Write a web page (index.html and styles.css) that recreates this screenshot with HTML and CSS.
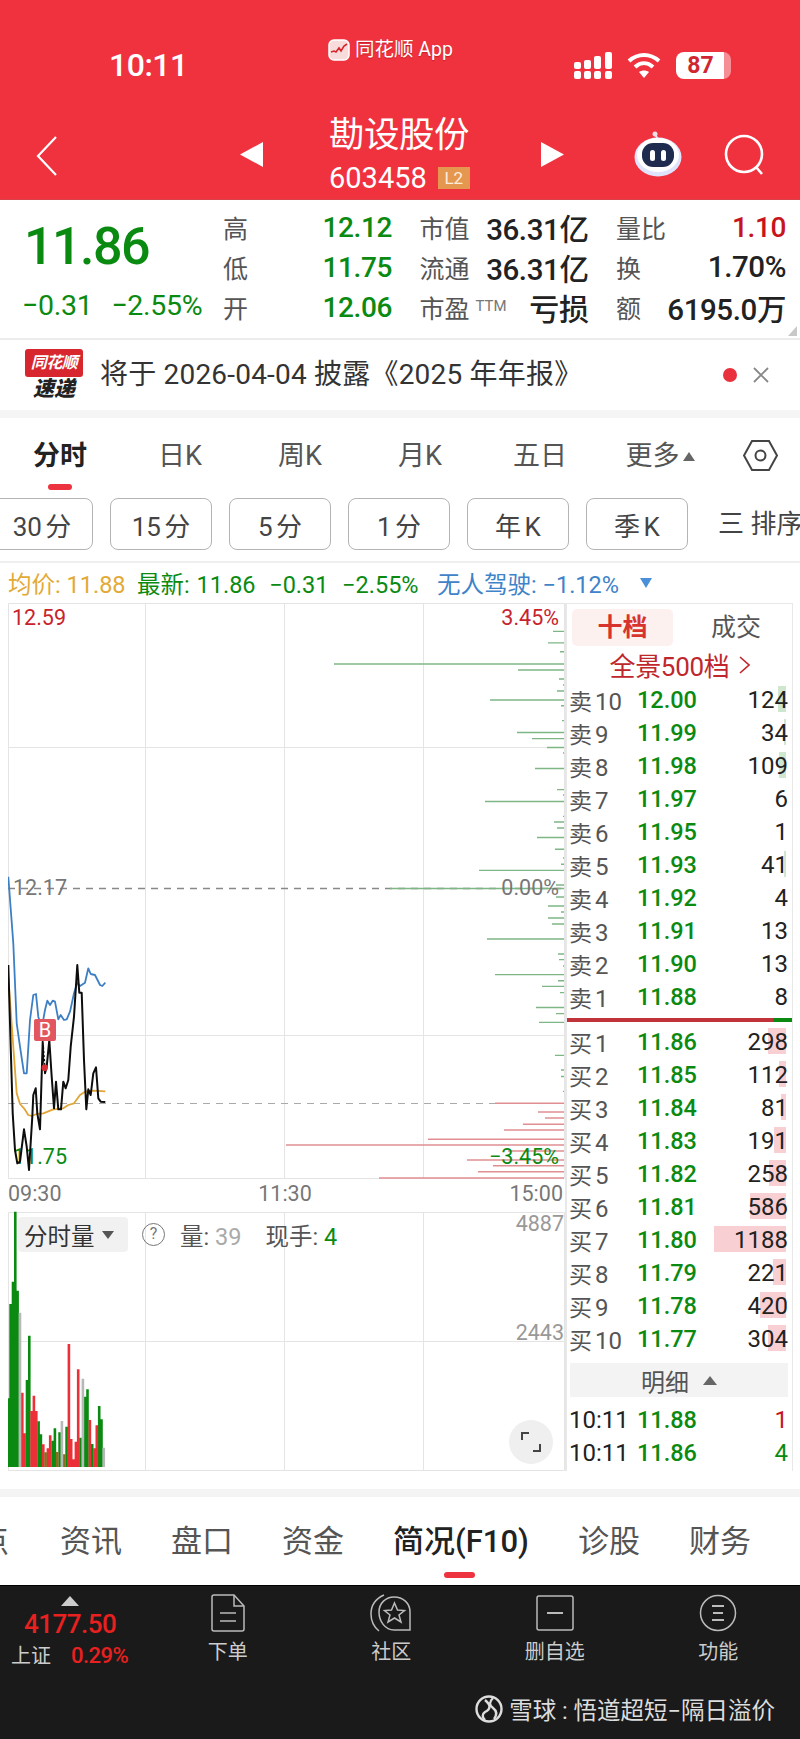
FILE: index.html
```html
<!DOCTYPE html>
<html lang="zh-CN">
<head>
  <meta charset="UTF-8" />
  <meta name="viewport" content="width=device-width, initial-scale=1" />
  <title>勘设股份 603458</title>
  <link rel="stylesheet" href="styles.css">
</head>
<body>

<header class="top">
  <div class="status">
    <span class="time">10:11</span>
    <span class="from-app">
      <svg class="app-icon" width="22" height="22" viewBox="0 0 22 22">
        <rect x="1" y="1" width="20" height="20" rx="5" fill="#f8dcdc" stroke="#fff" stroke-width="1.5"/>
        <path d="M3 13l3-1 2 1 3-4 2 3 3-5 3-2" fill="none" stroke="#d8262f" stroke-width="1.6"/>
      </svg>
      同花顺 App
    </span>
    <svg class="signal" width="38" height="27" viewBox="0 0 38 27" fill="#fff">
      <rect x="0" y="19" width="7" height="8" rx="2"/>
      <rect x="10" y="19" width="7" height="8" rx="2"/>
      <rect x="20" y="19" width="7" height="8" rx="2"/>
      <rect x="31" y="19" width="7" height="8" rx="2"/>
      <rect x="0" y="10" width="7" height="7" rx="2"/>
      <rect x="10" y="8" width="7" height="9" rx="2"/>
      <rect x="20" y="4" width="7" height="13" rx="2"/>
      <rect x="31" y="0" width="7" height="17" rx="2"/>
    </svg>
    <svg class="wifi" width="34" height="27" viewBox="0 0 34 27" fill="none" stroke="#fff" stroke-width="4">
      <path d="M2 9c9-8 21-8 30 0"/>
      <path d="M8 15c5.500-5 12.500-5 18 0"/>
      <path d="M17 26l-5-6c3-2 7-2 10 0z" fill="#fff" stroke="none"/>
    </svg>
    <span class="battery"><b>87</b></span>
  </div>

  <nav class="nav">
    <svg class="back" width="22" height="40" viewBox="0 0 22 40" fill="none" stroke="#fff" stroke-width="2.2">
      <path d="M20 1L2 20l18 19"/>
    </svg>
    <svg class="prev" width="23" height="25" viewBox="0 0 23 25" fill="#fff"><path d="M23 0v25L0 12.500z"/></svg>
    <div class="stock">
      <div class="stock-name">勘设股份</div>
      <div class="stock-code">603458 <span class="l2">L2</span></div>
    </div>
    <svg class="next" width="23" height="25" viewBox="0 0 23 25" fill="#fff"><path d="M0 0v25l23-12.500z"/></svg>
    <svg class="robot" width="48" height="46" viewBox="0 0 48 46">
      <circle cx="21" cy="3" r="2.500" fill="#f0dfe6"/>
      <path d="M21 4l4 5" stroke="#f0dfe6" stroke-width="2"/>
      <ellipse cx="24" cy="26" rx="23.500" ry="19.500" fill="#dfe3fb"/>
      <ellipse cx="24" cy="24" rx="21" ry="17" fill="#fff"/>
      <rect x="8" y="12" width="32" height="24" rx="11" fill="#1f2a4f"/>
      <rect x="16" y="19" width="5" height="11" rx="2.500" fill="#fff"/>
      <rect x="27" y="19" width="5" height="11" rx="2.500" fill="#fff"/>
    </svg>
    <svg class="search" width="42" height="42" viewBox="0 0 42 42" fill="none" stroke="#fff" stroke-width="2.6">
      <circle cx="20" cy="20" r="18"/>
      <path d="M32 33l6 7"/>
    </svg>
  </nav>
</header>

<section class="quote">
  <div class="price-block">
    <div class="last">11.86</div>
    <div class="change"><span>−0.31</span><span>−2.55%</span></div>
  </div>
  <div class="stats">
    <div class="stat"><span class="key">高</span><span class="val green">12.12</span></div>
    <div class="stat"><span class="key">市值</span><span class="val dark">36.31亿</span></div>
    <div class="stat"><span class="key">量比</span><span class="val red">1.10</span></div>
    <div class="stat"><span class="key">低</span><span class="val green">11.75</span></div>
    <div class="stat"><span class="key">流通</span><span class="val dark">36.31亿</span></div>
    <div class="stat"><span class="key">换</span><span class="val dark">1.70%</span></div>
    <div class="stat"><span class="key">开</span><span class="val green">12.06</span></div>
    <div class="stat"><span class="key">市盈<small>TTM</small></span><span class="val dark strong">亏损</span></div>
    <div class="stat"><span class="key">额</span><span class="val dark">6195.0万</span></div>
  </div>
  <i class="corner"></i>
</section>

<section class="notice">
  <div class="logo">
    <span class="logo-top">同花顺</span>
    <span class="logo-bottom">速递</span>
  </div>
  <p class="notice-text">将于 2026-04-04 披露《2025 年年报》</p>
  <i class="dot"></i>
  <svg class="close" width="16" height="16" viewBox="0 0 16 16" stroke="#888" stroke-width="1.8"><path d="M1 1l14 14M15 1L1 15"/></svg>
</section>

<section class="periods">
  <div class="period active">分时</div>
  <div class="period">日K</div>
  <div class="period">周K</div>
  <div class="period">月K</div>
  <div class="period">五日</div>
  <div class="period">更多<i class="up"></i></div>
  <svg class="hex" width="35" height="31" viewBox="0 0 35 31" fill="none" stroke="#444" stroke-width="2">
    <path d="M9 1h17l8 14.500L26 30H9L1 15.500z"/>
    <circle cx="17.500" cy="15.500" r="5"/>
  </svg>
</section>

<section class="minutes">
  <button class="minute">30 分</button>
  <button class="minute">15 分</button>
  <button class="minute">5 分</button>
  <button class="minute">1 分</button>
  <button class="minute">年 K</button>
  <button class="minute">季 K</button>
  <span class="sort">三 排序</span>
</section>

<section class="legend">
  <span class="avg">均价: 11.88</span>
  <span class="latest">最新: 11.86&nbsp; −0.31&nbsp; −2.55%</span>
  <span class="index">无人驾驶: −1.12%</span>
  <i class="down"></i>
</section>

<section class="board">
  <div class="chart">
    <!-- viewBox follows page coordinates so points read as x,y on the screen -->
    <svg width="557" height="868" viewBox="8 603 557 868">
      <g class="grid">
        <path d="M8.500 603.500H564.500V1178.500H8.500z"/>
        <path d="M145.500 603V1178M284.500 603V1178M423.500 603V1178"/>
        <path d="M8 747.500H564M8 1035.500H564"/>
        <path d="M8.500 1212.500H564.500V1470.500H8.500z"/>
        <path d="M145.500 1212V1470M284.500 1212V1470M423.500 1212V1470"/>
        <path d="M8 1341.500H564"/>
      </g>

      <path class="preclose" d="M8 888.500H564"/>
      <path class="avgline" d="M8 1103.500H564"/>

      <path class="ask-lines" d="M553 631.400H564M548 642.900H564M560 651.700H564M334 664H564M518 670H564M559 679H564M563 685H564M557 691H564M490 700H564M561 705.700H564M562 720.600H564M517 732.500H564M532 738.600H564M547 747.500H564M563 753H564M535 768.500H564M557 789.600H564M563 795H564M485 801.500H564M563 816.400H564M554 822H564M557 828H564M537 837.500H564M555 849.300H564M563 858H564M561 864.300H564M479 870.400H564M556 885H564M390 888.500H564M556 897H564M548 906H564M561 912H564M548 918H564M552 924H564M487 939H564M558 954H564M559 959.600H564M563 966H564M495 974.600H564M558 980.700H564M542 986.400H564M560 992.600H564M536 1007.500H564M556 1013.600H564M539 1022.400H564M555 1055.400H564M561 1070H564M561 1076.500H564M563 1091.400H564"/>
      <path class="bid-lines" d="M495 1103.300H564M538 1112H564M545 1118H564M523 1124.300H564M504 1130H564M428 1139.300H564M286 1145H564M508 1151H564M467 1160H564M493 1165.700H564M478 1171.800H564M379 1178H564"/>

      <text class="tick red-text" x="12" y="625">12.59</text>
      <text class="tick red-text end" x="559" y="625">3.45%</text>
      <text class="tick grey-text" x="13" y="895">12.17</text>
      <text class="tick grey-text end" x="559" y="895">0.00%</text>
      <text class="tick green-text" x="13" y="1164">11.75</text>
      <text class="tick green-text end" x="559" y="1164">−3.45%</text>
      <text class="tick grey-text" x="8" y="1201">09:30</text>
      <text class="tick grey-text mid" x="285" y="1201">11:30</text>
      <text class="tick grey-text end" x="563" y="1201">15:00</text>
      <text class="tick light-text end" x="564" y="1231">4887</text>
      <text class="tick light-text end" x="564" y="1340">2443</text>

      <polyline class="index-line" points="8.300,876.700 13.300,943.300 16.700,1023.300 20,1046.700 24,1073.300 26.700,1073.300 30,1020 33.300,995 36,994 38.300,1016.700 41.700,1028.300 45,1010 47.300,1000.700 50,1005 52.700,1000.700 55,1001.700 58.300,1019.300 60.700,1015 64,1020 66.700,1019.300 70,1011.700 74,993.300 77.300,982.700 80,986 85,982.700 88.300,968.300 90.700,974 95,975 100,985 102.300,986 105.300,982.700"/>
      <polyline class="avg-line" points="8.300,976.700 13.300,1046.700 16.700,1093.300 20,1104 24,1108.300 28.300,1115 31.700,1116 36.700,1114 43.300,1113.300 53.300,1109.300 63.300,1108.300 68.300,1105 74,1103.300 80,1095 85,1091.700 93.300,1090.700 105.300,1091.300"/>
      <polyline class="price-line" points="8.300,965 10.700,1046.700 12.700,1113.300 15,1150 17.300,1163.300 20,1161.700 24,1129.300 26.700,1146.700 29,1170 32.300,1116.700 33.300,1095 35.700,1088.300 37.300,1113.300 40,1129.300 42.700,1041.700 45,1073.300 46.700,1066.700 49.300,1040 51.700,1076.700 54,1108.300 56,1081.700 58.300,1109.300 61,1109.300 63.300,1081.700 65.700,1088.300 68.300,1080 70.700,1046.700 74,1016.700 77.300,965 79.300,992.700 81.700,992.700 84,1060 86.300,1109.300 88.300,1089.300 90.700,1095 93.300,1073.300 96,1067.300 98.300,1098.300 100.700,1101.700 105.300,1102"/>

      <path class="b-stem" d="M44.700 1041V1067"/>
      <circle class="b-dot" cx="44.700" cy="1067.700" r="3.200"/>
      <rect class="b-tag" x="34" y="1019" width="22" height="22" rx="2"/>
      <text class="b-text" x="45" y="1037">B</text>

      <!-- volume bars, one group per colour -->
      <path class="vol-down" d="M8.300 1398.300V1467M10.600 1304V1467M13 1281.700V1467M15.300 1211.700V1467M17.600 1290.700V1467M27 1380V1467M29.300 1335.700V1467M38.600 1421.300V1467M40.900 1434.300V1467M52.600 1440.700V1467M54.900 1428.300V1467M59.600 1432.300V1467M66.600 1426.700V1467M80.500 1437.700V1467M85.200 1396.700V1467M87.500 1389.300V1467M92.200 1444V1467M99.200 1406V1467M101.500 1419.300V1467"/>
      <path class="vol-up" d="M22.300 1392.700V1467M24.600 1433.300V1467M31.600 1411V1467M33.900 1395.700V1467M36.300 1411V1467M43.300 1444.300V1467M47.900 1448.300V1467M50.200 1435.300V1467M68.900 1344V1467M71.200 1439V1467M73.500 1459.300V1467M75.900 1441.700V1467M78.200 1369.300V1467M89.900 1420V1467M94.500 1448.300V1467M96.800 1425.300V1467"/>
      <path class="vol-mix" d="M45.600 1452.300V1467M57.200 1452V1467M64.200 1454.300V1467"/>
      <path class="vol-flat" d="M20 1312.700V1467M61.900 1421V1467M82.900 1378.700V1467M103.800 1447.700V1467"/>
    </svg>

    <div class="vol-head">
      <span class="vol-pick">分时量<i class="down-dark"></i></span>
      <span class="help">?</span>
      <span class="vol-key">量: <em class="vol-num">39</em></span>
      <span class="vol-key">现手: <em class="vol-hand">4</em></span>
    </div>
    <div class="expand">
      <svg width="22" height="22" viewBox="0 0 22 22" fill="none" stroke="#444" stroke-width="2">
        <path d="M2 9V2h7M20 13v7h-7"/>
      </svg>
    </div>
  </div>

  <aside class="book">
    <div class="book-tabs">
      <div class="book-tab on">十档</div>
      <div class="book-tab">成交</div>
    </div>
    <div class="panorama">全景500档 <svg width="11" height="18" viewBox="0 0 11 18" fill="none" stroke="#c0272d" stroke-width="1.600"><path d="M1 1l9 8-9 8"/></svg></div>

    <div class="row"><span class="lv">卖<b>10</b></span><span class="pr">12.00</span><span class="qty">124</span><i class="ask" style="width:8px"></i></div>
    <div class="row"><span class="lv">卖<b>9</b></span><span class="pr">11.99</span><span class="qty">34</span><i class="ask" style="width:2px"></i></div>
    <div class="row"><span class="lv">卖<b>8</b></span><span class="pr">11.98</span><span class="qty">109</span><i class="ask" style="width:7px"></i></div>
    <div class="row"><span class="lv">卖<b>7</b></span><span class="pr">11.97</span><span class="qty">6</span></div>
    <div class="row"><span class="lv">卖<b>6</b></span><span class="pr">11.95</span><span class="qty">1</span></div>
    <div class="row"><span class="lv">卖<b>5</b></span><span class="pr">11.93</span><span class="qty">41</span><i class="ask" style="width:2px"></i></div>
    <div class="row"><span class="lv">卖<b>4</b></span><span class="pr">11.92</span><span class="qty">4</span></div>
    <div class="row"><span class="lv">卖<b>3</b></span><span class="pr">11.91</span><span class="qty">13</span></div>
    <div class="row"><span class="lv">卖<b>2</b></span><span class="pr">11.90</span><span class="qty">13</span></div>
    <div class="row"><span class="lv">卖<b>1</b></span><span class="pr">11.88</span><span class="qty">8</span></div>

    <div class="ratio"><i class="ratio-bid"></i><i class="ratio-ask"></i></div>

    <div class="row"><span class="lv">买<b>1</b></span><span class="pr">11.86</span><span class="qty">298</span><i class="bid" style="width:18px"></i></div>
    <div class="row"><span class="lv">买<b>2</b></span><span class="pr">11.85</span><span class="qty">112</span><i class="bid" style="width:7px"></i></div>
    <div class="row"><span class="lv">买<b>3</b></span><span class="pr">11.84</span><span class="qty">81</span><i class="bid" style="width:5px"></i></div>
    <div class="row"><span class="lv">买<b>4</b></span><span class="pr">11.83</span><span class="qty">191</span><i class="bid" style="width:12px"></i></div>
    <div class="row"><span class="lv">买<b>5</b></span><span class="pr">11.82</span><span class="qty">258</span><i class="bid" style="width:17px"></i></div>
    <div class="row"><span class="lv">买<b>6</b></span><span class="pr">11.81</span><span class="qty">586</span><i class="bid" style="width:36px"></i></div>
    <div class="row"><span class="lv">买<b>7</b></span><span class="pr">11.80</span><span class="qty">1188</span><i class="bid" style="width:72px"></i></div>
    <div class="row"><span class="lv">买<b>8</b></span><span class="pr">11.79</span><span class="qty">221</span><i class="bid" style="width:13px"></i></div>
    <div class="row"><span class="lv">买<b>9</b></span><span class="pr">11.78</span><span class="qty">420</span><i class="bid" style="width:26px"></i></div>
    <div class="row"><span class="lv">买<b>10</b></span><span class="pr">11.77</span><span class="qty">304</span><i class="bid" style="width:18px"></i></div>

    <div class="detail">明细<i class="up-dark"></i></div>
    <div class="row"><span class="clock">10:11</span><span class="pr">11.88</span><span class="qty buy">1</span></div>
    <div class="row"><span class="clock">10:11</span><span class="pr">11.86</span><span class="qty sell">4</span></div>
  </aside>
</section>

<div class="band"></div>

<section class="sections">
  <span class="section cut">点</span>
  <span class="section">资讯</span>
  <span class="section">盘口</span>
  <span class="section">资金</span>
  <span class="section current">简况(F10)</span>
  <span class="section">诊股</span>
  <span class="section">财务</span>
</section>

<footer class="dock">
  <div class="dock-row">
    <div class="market">
      <i class="market-up"></i>
      <div class="market-num">4177.50</div>
      <div class="market-sub"><span>上证</span><b>0.29%</b></div>
    </div>
    <div class="dock-item">
      <svg width="34" height="38" viewBox="0 0 34 38" fill="none" stroke="#bbb" stroke-width="1.500">
        <path d="M3 1h20l10 11v23a2 2 0 0 1-2 2H3a2 2 0 0 1-2-2V3a2 2 0 0 1 2-2z"/>
        <path d="M23 1v11h10M9 19h16M9 27h16"/>
      </svg>
      <span>下单</span>
    </div>
    <div class="dock-item">
      <svg width="42" height="38" viewBox="0 0 42 38" fill="none" stroke="#bbb" stroke-width="1.500">
        <path d="M14 1C5 5 1 12 1 20c0 7 3 13 8 17"/>
        <path d="M24 3c-8 0-15 6-15 15s6 18 15 18h16V18c0-9-7-15-16-15z"/>
        <path d="M24.500 9l3 7 7 .500-5.500 4.500 2 7-6.500-4-6.500 4 2-7-5.500-4.500 7-.500z"/>
      </svg>
      <span>社区</span>
    </div>
    <div class="dock-item">
      <svg width="38" height="38" viewBox="0 0 38 38" fill="none" stroke="#bbb" stroke-width="1.500">
        <rect x="1" y="2" width="36" height="34" rx="2"/>
        <path d="M11 19h16" stroke-width="2"/>
      </svg>
      <span>删自选</span>
    </div>
    <div class="dock-item">
      <svg width="38" height="38" viewBox="0 0 38 38" fill="none" stroke="#bbb" stroke-width="1.500">
        <circle cx="19" cy="19" r="17.500"/>
        <path d="M13 12h12M14 19h10M13 26h12" stroke-width="2"/>
      </svg>
      <span>功能</span>
    </div>
  </div>
  <div class="mark">
    <svg width="28" height="28" viewBox="0 0 28 28" fill="none" stroke="#ddd" stroke-width="2.400">
      <circle cx="14" cy="14" r="12.500"/>
      <path d="M10 5c6 5 6 9 0 12-3 2-3 5 0 8M18 3c-4 4-4 7 0 10 4 3 4 7 1 11"/>
    </svg>
    <span>雪球 : 悟道超短−隔日溢价</span>
  </div>
</footer>

</body>
</html>
```

FILE: styles.css
```css
* {
  box-sizing: border-box;
}

body {
  margin: 0;
  width: 800px;
  height: 1739px;
  overflow: hidden;
  background: #fff;
  color: #222;
  font-family: Roboto, "Noto Sans CJK SC", sans-serif;
}

i {
  display: block;
  font-style: normal;
}

em {
  font-style: normal;
}

/* red header */
.top {
  height: 200px;
  background: #f0323f;
  color: #fff;
  border-bottom: 1px solid #d9414a;
}

.status {
  height: 100px;
  display: flex;
  align-items: flex-start;
  padding-left: 109px;
}

.time {
  width: 219px;
  margin-top: 45px;
  font-size: 32px;
  line-height: 40px;
  font-weight: 500;
  letter-spacing: -0.5px;
}

.from-app {
  width: 246px;
  margin-top: 39px;
  display: flex;
  align-items: center;
  gap: 5px;
  font-size: 19.500px;
  line-height: 22px;
  text-shadow: 0 1px 1px rgba(120, 0, 0, 0.4);
}

.signal {
  margin-top: 52px;
}

.wifi {
  margin: 52px 0 0 15px;
}

.battery {
  margin: 52px 0 0 15px;
  width: 55px;
  height: 27px;
  border-radius: 8px;
  background: linear-gradient(90deg, #fff 88%, rgba(255, 255, 255, 0.45) 88%);
  color: #d0262f;
  text-align: center;
  line-height: 27px;
  font-size: 23px;
  padding-right: 6px;
}

.nav {
  height: 99px;
  display: flex;
  align-items: flex-start;
  padding-left: 36px;
}

.back {
  margin-top: 36px;
}

.prev {
  margin: 42px 0 0 182px;
}

.stock {
  width: 278px;
  padding-left: 66px;
  margin-top: 14px;
}

.stock-name {
  font-size: 35.500px;
  line-height: 42px;
  letter-spacing: -0.5px;
}

.stock-code {
  margin-top: 10px;
  display: flex;
  align-items: center;
  gap: 11px;
  font-size: 29px;
  line-height: 24px;
}

.l2 {
  width: 32px;
  height: 22px;
  background: #e6974f;
  text-align: center;
  font-size: 17px;
  line-height: 22px;
  color: #fbeedd;
}

.next {
  margin-top: 42px;
}

.robot {
  margin: 31px 0 0 70px;
}

.search {
  margin: 34px 0 0 42px;
}

/* quote summary */
.quote {
  position: relative;
  height: 140px;
  display: flex;
  border-bottom: 2px solid #ececec;
}

.price-block {
  width: 223px;
  padding-left: 22px;
}

.last {
  margin: 19px 0 0 2px;
  font-size: 52px;
  line-height: 56px;
  font-weight: 500;
  color: #0b8a12;
  letter-spacing: -1.500px;
}

.change {
  margin-top: 16px;
  display: flex;
  gap: 19px;
  font-size: 28.500px;
  line-height: 30px;
  color: #0b8a12;
  letter-spacing: -0.3px;
}

.stats {
  width: 563px;
  margin-top: 7px;
  display: grid;
  grid-template-columns: 169px 169px 170px;
  grid-auto-rows: 40px;
  column-gap: 27.500px;
}

.stat {
  display: flex;
  justify-content: space-between;
  align-items: center;
}

.key {
  font-size: 25px;
  color: #555;
  white-space: nowrap;
}

.key small {
  margin-left: 6px;
  font-size: 15px;
  vertical-align: 7px;
  color: #777;
}

.val {
  font-size: 28px;
  font-weight: 500;
  letter-spacing: -0.4px;
  white-space: nowrap;
}

.green {
  color: #0b8a12;
}

.red {
  color: #c8141e;
}

.dark {
  color: #222;
  font-size: 29.500px;
}

.strong {
  font-size: 30px;
}

.corner {
  position: absolute;
  right: 3px;
  bottom: 2px;
  width: 0;
  height: 0;
  border-left: 9px solid transparent;
  border-bottom: 10px solid #c8c8c8;
}

/* notice strip */
.notice {
  display: flex;
  align-items: center;
  border-bottom: 8px solid #f5f5f5;
  height: 78px;
  padding: 0 0 0 25px;
}

.logo {
  width: 58px;
  display: flex;
  flex-direction: column;
  align-items: center;
}

.logo-top {
  width: 58px;
  height: 28px;
  background: #d8262f;
  border-radius: 3px;
  color: #fff;
  font-size: 16px;
  line-height: 28px;
  font-weight: 700;
  font-style: italic;
  text-align: center;
  letter-spacing: -0.5px;
}

.logo-bottom {
  margin-top: 1px;
  font-size: 21px;
  line-height: 23px;
  font-weight: 900;
  font-style: italic;
  color: #222;
}

.notice-text {
  margin: 0 0 0 17px;
  width: 614px;
  font-size: 28px;
  line-height: 36px;
  color: #333;
  letter-spacing: 0.2px;
  white-space: nowrap;
}

.dot {
  margin-left: 9px;
  width: 14px;
  height: 14px;
  border-radius: 50%;
  background: #e8313c;
}

.close {
  margin-left: 16px;
}

/* chart period tabs */
.periods {
  height: 80px;
  display: flex;
  align-items: flex-start;
}

.period {
  position: relative;
  width: 120px;
  margin-top: 19px;
  display: flex;
  justify-content: center;
  align-items: center;
  font-size: 27px;
  line-height: 38px;
  color: #555;
}

.period.active {
  color: #222;
  font-weight: 700;
}

.period.active::after {
  content: "";
  position: absolute;
  left: 48px;
  top: 47px;
  width: 24px;
  height: 6px;
  border-radius: 3px;
  background: #ee3340;
}

.up {
  margin-left: 3px;
  width: 0;
  height: 0;
  border-left: 6px solid transparent;
  border-right: 6px solid transparent;
  border-bottom: 9px solid #666;
}

.hex {
  margin: 22px 0 0 23px;
}

.minutes {
  height: 65px;
  margin-left: -9px;
  display: flex;
  align-items: flex-start;
  gap: 17px;
  white-space: nowrap;
  border-bottom: 2px solid #efefef;
  width: 809px;
}

.minute {
  width: 102px;
  height: 52px;
  padding: 0;
  flex: none;
  border: 1px solid #b4b4b4;
  border-radius: 8px;
  background: #fff;
  color: #444;
  font-family: inherit;
  font-size: 26px;
  word-spacing: -3px;
}

.sort {
  margin-left: 13px;
  font-size: 26px;
  line-height: 52px;
  color: #444;
}

.legend {
  height: 40px;
  padding-left: 8px;
  display: flex;
  align-items: center;
  font-size: 23.500px;
  white-space: nowrap;
}

.avg {
  width: 129px;
  color: #e2aa36;
}

.latest {
  width: 300px;
  color: #0b8a12;
  word-spacing: 1px;
}

.index {
  width: 203px;
  color: #3f83c8;
}

.down {
  width: 0;
  height: 0;
  border-left: 6px solid transparent;
  border-right: 6px solid transparent;
  border-top: 10px solid #4a90d9;
}

/* chart and order book */
.board {
  height: 868px;
  margin-left: 8px;
  display: flex;
}

.chart {
  position: relative;
  width: 557px;
  height: 868px;
}

.chart svg {
  display: block;
}

.grid path {
  fill: none;
  stroke: #e4e4e4;
  stroke-width: 1;
}

.preclose {
  stroke: #888;
  stroke-width: 1.400;
  stroke-dasharray: 7 6;
}

.avgline {
  stroke: #aaa;
  stroke-width: 1;
  stroke-dasharray: 7 6;
}

.ask-lines {
  stroke: #7fb685;
  stroke-width: 1.400;
}

.bid-lines {
  stroke: #df8f92;
  stroke-width: 1.400;
}

.tick {
  font-size: 21.500px;
}

.end {
  text-anchor: end;
}

.mid {
  text-anchor: middle;
}

.red-text {
  fill: #c8232c;
}

.grey-text {
  fill: #777;
}

.green-text {
  fill: #0b8a12;
}

.light-text {
  fill: #999;
}

.index-line,
.avg-line,
.price-line {
  fill: none;
  stroke-linejoin: round;
}

.index-line {
  stroke: #3d7fc4;
  stroke-width: 1.800;
}

.avg-line {
  stroke: #e0a535;
  stroke-width: 1.800;
}

.price-line {
  stroke: #0d0d0d;
  stroke-width: 2;
}

.b-stem {
  stroke: #fff;
  stroke-width: 1;
  stroke-dasharray: 2 2;
}

.b-dot {
  fill: #d92f37;
}

.b-tag {
  fill: #e2565f;
}

.b-text {
  fill: #fff;
  font-size: 20px;
  text-anchor: middle;
}

.vol-down,
.vol-up,
.vol-mix,
.vol-flat {
  stroke-width: 2.600;
}

.vol-down {
  stroke: #0b8a12;
}

.vol-up {
  stroke: #ec3038;
}

.vol-mix {
  stroke: #8c6a1f;
}

.vol-flat {
  stroke: #b8b8b8;
}

.vol-head {
  position: absolute;
  left: 10px;
  top: 614px;
  display: flex;
  align-items: center;
  font-size: 23.500px;
  color: #555;
  white-space: nowrap;
}

.vol-pick {
  width: 110px;
  height: 35px;
  display: flex;
  align-items: center;
  padding-left: 6px;
  border-radius: 4px;
  background: rgba(240, 240, 240, 0.95);
  color: #333;
}

.down-dark {
  margin-left: 7px;
  width: 0;
  height: 0;
  border-left: 6px solid transparent;
  border-right: 6px solid transparent;
  border-top: 8px solid #555;
}

.help {
  margin-left: 14px;
  width: 23px;
  height: 23px;
  border: 1.500px solid #777;
  border-radius: 50%;
  text-align: center;
  font-size: 16px;
  line-height: 20px;
  color: #777;
}

.vol-key {
  margin-left: 15px;
}

.vol-key + .vol-key {
  margin-left: 24px;
}

.vol-num {
  color: #aaa;
}

.vol-hand {
  color: #0b8a12;
}

.expand {
  position: absolute;
  left: 501px;
  top: 817px;
  width: 44px;
  height: 44px;
  border-radius: 50%;
  background: #efefef;
  display: flex;
  align-items: center;
  justify-content: center;
}

.book {
  width: 228px;
  height: 868px;
  border-top: 1px solid #e8e8e8;
  border-left: 2px solid #e8e8e8;
  border-right: 1px solid #e8e8e8;
}

.book-tabs {
  margin: 5px 0 0 5px;
  display: flex;
  height: 37px;
}

.book-tab {
  width: 101px;
  text-align: center;
  font-size: 25px;
  line-height: 37px;
  color: #555;
}

.book-tab + .book-tab {
  width: 118px;
  padding-left: 8px;
}

.book-tab.on {
  border-radius: 5px;
  background: #fdf1f0;
  color: #d8342f;
  font-weight: 700;
}

.panorama {
  height: 37px;
  display: flex;
  align-items: center;
  justify-content: center;
  gap: 9px;
  font-size: 26px;
  color: #c0272d;
  letter-spacing: -0.3px;
}

.row {
  position: relative;
  height: 33px;
  display: flex;
  align-items: center;
  padding: 0 4px 0 2px;
  font-size: 24px;
}

.lv {
  width: 68px;
  font-size: 23px;
  color: #555;
  white-space: nowrap;
}

.lv b {
  margin-left: 3px;
  font-weight: 400;
  font-size: 24px;
}

.clock {
  width: 68px;
  color: #222;
}

.pr {
  width: 60px;
  color: #0b8a12;
  font-size: 23.500px;
  font-weight: 500;
}

.qty {
  position: relative;
  z-index: 1;
  flex: 1;
  text-align: right;
  color: #222;
}

.qty.buy {
  color: #c8141e;
}

.qty.sell {
  color: #0b8a12;
}

.ask,
.bid {
  position: absolute;
  right: 6px;
  top: 3px;
  height: 26px;
}

.ask {
  background: #cfe6cf;
}

.bid {
  background: #f8d0d3;
}

.ratio {
  margin: 5px 0 3px;
  height: 4px;
  display: flex;
}

.ratio-bid {
  width: 206px;
  background: #c0333a;
}

.ratio-ask {
  flex: 1;
  background: #0b8a12;
}

.detail {
  margin: 8px 4px 6px 3px;
  height: 34px;
  background: #f3f3f3;
  display: flex;
  align-items: center;
  justify-content: center;
  gap: 14px;
  font-size: 24px;
  color: #555;
}

.up-dark {
  width: 0;
  height: 0;
  border-left: 7px solid transparent;
  border-right: 7px solid transparent;
  border-bottom: 9px solid #666;
}

/* lower section tabs */
.band {
  height: 8px;
  margin-top: 18px;
  background: #f4f4f4;
}

.sections {
  position: relative;
  height: 88px;
  padding: 27px 0 0;
  margin-left: -22px;
  display: flex;
  gap: 49px;
  white-space: nowrap;
}

.section {
  font-size: 31px;
  line-height: 36px;
  color: #555;
}

.section.cut {
  margin-right: 2px;
}

.section.current {
  position: relative;
  color: #222;
  font-weight: 500;
}

.section.current::after {
  content: "";
  position: absolute;
  left: 51px;
  top: 48px;
  width: 31px;
  height: 6px;
  border-radius: 3px;
  background: #ee3340;
}

/* dark bottom dock */
.dock {
  height: 155px;
  background: #1a1a1a;
  border-top: 1px solid #000;
  color: #ccc;
}

.dock-row {
  height: 101px;
  display: flex;
}

.market {
  width: 146px;
  padding: 10px 0 0 11px;
}

.market-up {
  width: 0;
  height: 0;
  margin-left: 50px;
  border-left: 9px solid transparent;
  border-right: 9px solid transparent;
  border-bottom: 10px solid #ccc;
}

.market-num {
  margin: 2px 0 0 13px;
  font-size: 26px;
  line-height: 32px;
  color: #e8201f;
  font-weight: 500;
  letter-spacing: -0.5px;
}

.market-sub {
  margin-top: 2px;
  display: flex;
  gap: 20px;
  font-size: 20px;
  line-height: 28px;
}

.market-sub b {
  font-weight: 500;
  font-size: 22px;
  color: #e8201f;
  letter-spacing: -0.5px;
}

.dock-item {
  width: 163.500px;
  padding-top: 8px;
  display: flex;
  flex-direction: column;
  align-items: center;
  gap: 6px;
  font-size: 20px;
  line-height: 28px;
}

.mark {
  padding-right: 25px;
  display: flex;
  justify-content: flex-end;
  align-items: center;
  gap: 6px;
  height: 44px;
  font-size: 23.500px;
  color: #ddd;
  white-space: nowrap;
}
```
